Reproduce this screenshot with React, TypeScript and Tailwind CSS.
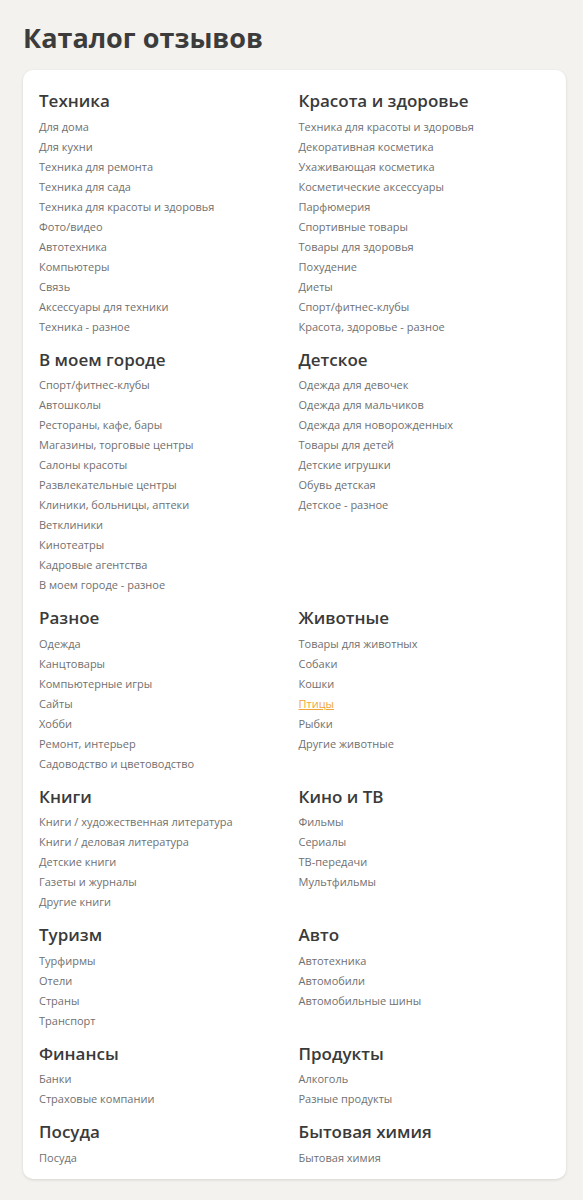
const sections: { title: string; items: string[] }[][] = [
  [
    {
      title: 'Техника',
      items: [
        'Для дома',
        'Для кухни',
        'Техника для ремонта',
        'Техника для сада',
        'Техника для красоты и здоровья',
        'Фото/видео',
        'Автотехника',
        'Компьютеры',
        'Связь',
        'Аксессуары для техники',
        'Техника - разное',
      ],
    },
    {
      title: 'Красота и здоровье',
      items: [
        'Техника для красоты и здоровья',
        'Декоративная косметика',
        'Ухаживающая косметика',
        'Косметические аксессуары',
        'Парфюмерия',
        'Спортивные товары',
        'Товары для здоровья',
        'Похудение',
        'Диеты',
        'Спорт/фитнес-клубы',
        'Красота, здоровье - разное',
      ],
    },
  ],
  [
    {
      title: 'В моем городе',
      items: [
        'Спорт/фитнес-клубы',
        'Автошколы',
        'Рестораны, кафе, бары',
        'Магазины, торговые центры',
        'Салоны красоты',
        'Развлекательные центры',
        'Клиники, больницы, аптеки',
        'Ветклиники',
        'Кинотеатры',
        'Кадровые агентства',
        'В моем городе - разное',
      ],
    },
    {
      title: 'Детское',
      items: [
        'Одежда для девочек',
        'Одежда для мальчиков',
        'Одежда для новорожденных',
        'Товары для детей',
        'Детские игрушки',
        'Обувь детская',
        'Детское - разное',
      ],
    },
  ],
  [
    {
      title: 'Разное',
      items: [
        'Одежда',
        'Канцтовары',
        'Компьютерные игры',
        'Сайты',
        'Хобби',
        'Ремонт, интерьер',
        'Садоводство и цветоводство',
      ],
    },
    {
      title: 'Животные',
      items: ['Товары для животных', 'Собаки', 'Кошки', 'Птицы', 'Рыбки', 'Другие животные'],
    },
  ],
  [
    {
      title: 'Книги',
      items: [
        'Книги / художественная литература',
        'Книги / деловая литература',
        'Детские книги',
        'Газеты и журналы',
        'Другие книги',
      ],
    },
    {
      title: 'Кино и ТВ',
      items: ['Фильмы', 'Сериалы', 'ТВ-передачи', 'Мультфильмы'],
    },
  ],
  [
    {
      title: 'Туризм',
      items: ['Турфирмы', 'Отели', 'Страны', 'Транспорт'],
    },
    {
      title: 'Авто',
      items: ['Автотехника', 'Автомобили', 'Автомобильные шины'],
    },
  ],
  [
    { title: 'Финансы', items: ['Банки', 'Страховые компании'] },
    { title: 'Продукты', items: ['Алкоголь', 'Разные продукты'] },
  ],
  [
    { title: 'Посуда', items: ['Посуда'] },
    { title: 'Бытовая химия', items: ['Бытовая химия'] },
  ],
];

function Section({ title, items }: { title: string; items: string[] }) {
  return (
    <div>
      <h2 className="mb-[3.5px] text-[17px] font-semibold leading-[24px] text-[#3a3a3a]">{title}</h2>
      <ul>
        {items.map((item) => (
          <li key={item} className="text-[11px] leading-[20px]">
            {item === 'Птицы' ? (
              <a href="#" className="text-[#f0a53a] underline">
                {item}
              </a>
            ) : (
              <a href="#" className="text-[#707070]">
                {item}
              </a>
            )}
          </li>
        ))}
      </ul>
    </div>
  );
}

export default function App() {
  return (
    <div className="min-h-[1200px] bg-[#f3f2ee] px-[23px] pt-[19px] pb-6 font-['Open_Sans',sans-serif]">
      <h1 className="text-[27px] font-bold leading-[37px] text-[#3c3c3c]">Каталог отзывов</h1>
      <div className="mt-[14px] w-[543px] rounded-[10px] bg-white px-4 pt-[19px] pb-[11px] shadow-[0_1px_3px_rgba(0,0,0,0.12)]">
        <div className="grid grid-cols-2 gap-x-2 gap-y-[11px]">
          {sections.flat().map((s) => (
            <Section key={s.title} title={s.title} items={s.items} />
          ))}
        </div>
      </div>
    </div>
  );
}
